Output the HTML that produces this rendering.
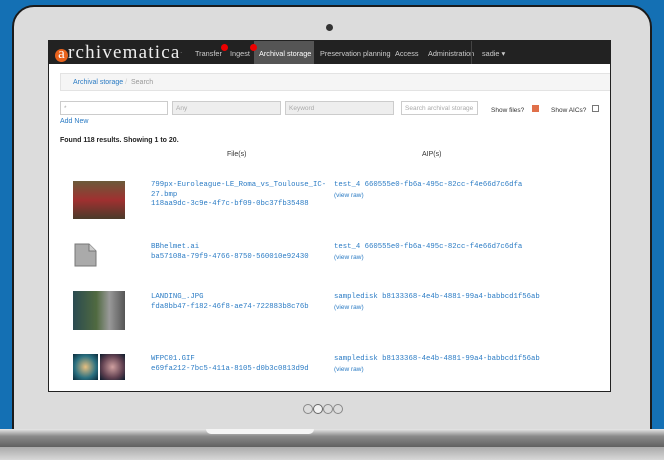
<!DOCTYPE html>
<html><head><style>
*{margin:0;padding:0;box-sizing:border-box}
body{width:664px;height:460px;overflow:hidden;background:#1470b4;position:relative;font-family:"Liberation Sans",sans-serif}
.lid{position:absolute;left:12px;top:5px;width:640px;height:432px;background:#dcdcdc;border:2px solid #1b1b1b;border-radius:22px 22px 0 0}
.cam{position:absolute;left:326px;top:24px;width:7px;height:7px;border-radius:50%;background:#333}
.screen{position:absolute;left:48px;top:40px;width:563px;height:352px;background:#fff;border:1px solid #222;overflow:hidden}
.nav{height:23px;background:#222;position:relative;color:#ccc;font-size:7.3px}
.nav span{position:absolute;top:8px}
.logo{position:absolute;left:6px;top:1px;font-family:"Liberation Serif",serif;font-size:19px;color:#eee;letter-spacing:1.2px}
.logo b{display:inline-block;width:13px;height:13px;border-radius:50%;background:#e8621c;color:#fff;font-weight:normal;font-size:15px;line-height:11px;text-align:center;letter-spacing:0}
.badge{position:absolute;width:7px;height:7px;border-radius:50%;background:#e00;top:3px}
.act{position:absolute;left:205px;top:0;width:60px;height:23px;background:#555}
.crumb{position:absolute;left:11px;top:32px;width:560px;height:18px;background:#f5f5f5;border:1px solid #e3e3e3;font-size:7px;padding:5px 12px;color:#999}
.crumb a{color:#2a7bc4}
.in{position:absolute;height:14px;border:1px solid #ccc;font-size:6.5px;color:#aaa;padding:3px 3px;background:#fff}
.sel{background:#eee}
.mono{font-family:"Liberation Mono",monospace;font-size:7.3px;color:#2a7bc4;line-height:9.5px;position:absolute}
.vr{font-family:"Liberation Sans",sans-serif;font-size:6.5px}
.th{position:absolute}
.dot{display:inline-block;width:10px;height:10px;border:1px solid #888;border-radius:50%;background:#ddd}
</style></head><body>
<div class="lid"></div>
<div class="cam"></div>
<div class="screen">
<div class="nav">
<div class="logo"><b>a</b>rchivematica<span style="font-size:5px">.</span></div>
<div class="act"></div>
<span style="left:146px">Transfer</span><div class="badge" style="left:172px"></div>
<span style="left:181px">Ingest</span><div class="badge" style="left:201px"></div>
<span style="left:210px;color:#fff">Archival storage</span>
<span style="left:271px">Preservation planning</span>
<span style="left:346px">Access</span>
<span style="left:379px">Administration</span>
<span style="left:422px;top:0;height:23px;border-left:1px solid #444"></span>
<span style="left:433px">sadie ▾</span>
</div>
<div class="crumb"><a>Archival storage</a> <span style="color:#ccc">/</span> &nbsp;Search</div>
<div class="in" style="left:11px;top:60px;width:108px">*</div>
<div class="in sel" style="left:123px;top:60px;width:109px">Any</div>
<div class="in sel" style="left:236px;top:60px;width:109px">Keyword</div>
<div class="in" style="left:352px;top:60px;width:77px">Search archival storage</div>
<div style="position:absolute;left:442px;top:64px;font-size:6.5px;color:#333">Show files? <span style="display:inline-block;width:7px;height:7px;background:#e0704a;margin-left:6px"></span></div>
<div style="position:absolute;left:502px;top:64px;font-size:6.5px;color:#333">Show AICs? <span style="display:inline-block;width:7px;height:7px;border:1px solid #777;margin-left:4px"></span></div>
<div style="position:absolute;left:11px;top:77px;font-size:7px;color:#2a7bc4">Add New</div>
<div style="position:absolute;left:11px;top:96px;font-size:7px;font-weight:bold;color:#222">Found 118 results. Showing 1 to 20.</div>
<div style="position:absolute;left:178px;top:110px;font-size:7px;color:#333">File(s)</div>
<div style="position:absolute;left:373px;top:110px;font-size:7px;color:#333">AIP(s)</div>

<div class="th" style="left:24px;top:140px;width:52px;height:38px;background:linear-gradient(#6b5a3a,#a03030 50%,#4a3a2a)"></div>
<div class="mono" style="left:102px;top:140px">799px-Euroleague-LE_Roma_vs_Toulouse_IC-<br>27.bmp<br>118aa9dc-3c9e-4f7c-bf09-0bc37fb35488</div>
<div class="mono" style="left:285px;top:140px">test_4 660555e0-fb6a-495c-82cc-f4e66d7c6dfa<br><span class="vr">(view raw)</span></div>

<svg class="th" style="left:25px;top:202px" width="23" height="24"><path d="M1 1H15L22 8V23H1Z" fill="#aaa" stroke="#777"/><path d="M15 1V8H22" fill="#ccc" stroke="#777"/></svg>
<div class="mono" style="left:102px;top:202px">BBhelmet.ai<br>ba57108a-79f9-4766-8750-560010e92430</div>
<div class="mono" style="left:285px;top:202px">test_4 660555e0-fb6a-495c-82cc-f4e66d7c6dfa<br><span class="vr">(view raw)</span></div>

<div class="th" style="left:24px;top:250px;width:52px;height:39px;background:linear-gradient(90deg,#2a4a50,#506a40 45%,#999 70%,#555)"></div>
<div class="mono" style="left:102px;top:252px">LANDING_.JPG<br>fda8bb47-f182-46f8-ae74-722883b8c76b</div>
<div class="mono" style="left:285px;top:252px">sampledisk b8133368-4e4b-4881-99a4-babbcd1f56ab<br><span class="vr">(view raw)</span></div>

<div class="th" style="left:24px;top:313px;width:25px;height:26px;background:radial-gradient(#e8c080,#2a7080 60%,#0a2a3a)"></div>
<div class="th" style="left:51px;top:313px;width:25px;height:26px;background:radial-gradient(#d0a0a0,#604050 60%,#0a1a2a)"></div>
<div class="mono" style="left:102px;top:314px">WFPC01.GIF<br>e69fa212-7bc5-411a-8105-d0b3c0813d9d</div>
<div class="mono" style="left:285px;top:314px">sampledisk b8133368-4e4b-4881-99a4-babbcd1f56ab<br><span class="vr">(view raw)</span></div>
</div>
<div style="position:absolute;left:303px;top:404px;font-size:0"><span class="dot"></span><span class="dot" style="background:#f2f2f2;border-color:#666"></span><span class="dot"></span><span class="dot"></span></div>
<div style="position:absolute;left:0;top:429px;width:664px;height:18px;background:linear-gradient(#e8e8e8,#8a8a8a 40%,#606060)"></div>
<div style="position:absolute;left:206px;top:429px;width:108px;height:5px;background:#f5f5f5;border-radius:0 0 6px 6px"></div>
<div style="position:absolute;left:0;top:447px;width:664px;height:13px;background:linear-gradient(#aaa,#d8d8d8)"></div>
</body></html>
